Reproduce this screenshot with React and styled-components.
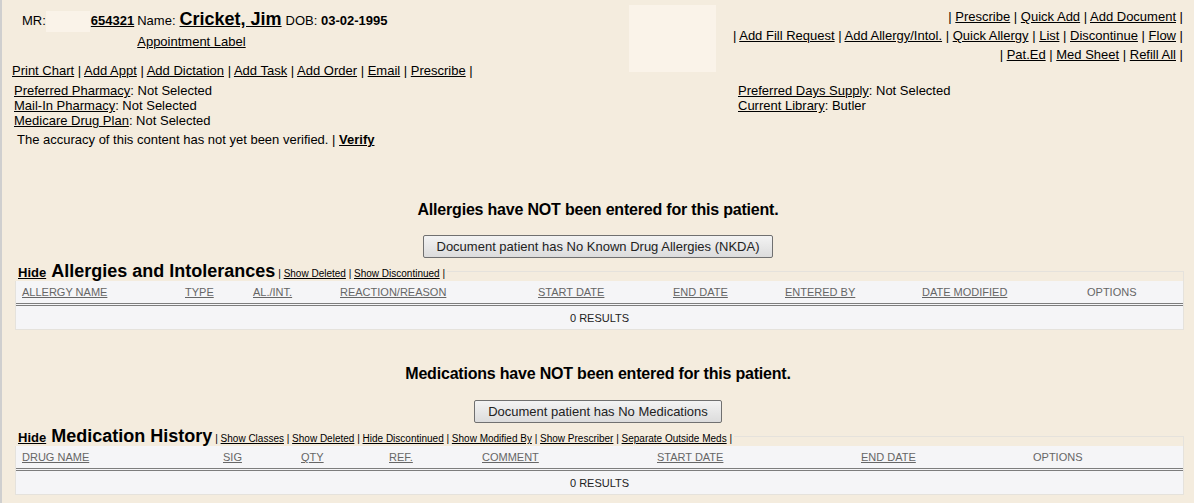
import React from "react";
import styled, { createGlobalStyle } from "styled-components";

const GlobalStyle = createGlobalStyle`
  html, body {
    margin: 0;
    padding: 0;
    background: #f4ecde;
  }
  body {
    font-family: "Liberation Sans", Arial, sans-serif;
    font-size: 13px;
    color: #000;
  }
`;

const Page = styled.div`
  min-height: 100vh;
  box-sizing: border-box;
  border-left: 2px solid #cfcfcf;
`;

const Link = styled.a`
  color: #000;
  text-decoration: underline;
  cursor: pointer;
  font-weight: ${(p) => (p.$bold ? "bold" : "normal")};
`;

const Header = styled.div`
  display: flex;
  align-items: flex-start;
  padding-top: 5px;
`;

const PatientBlock = styled.div`
  padding-top: 3px;
`;

const PatientGrid = styled.div`
  display: grid;
  grid-template-columns: auto auto;
  justify-content: start;
  align-items: baseline;
  column-gap: 3px;
  row-gap: 2px;
  margin-left: 20px;
`;

const InfoCell = styled.div`
  line-height: 22px;
  white-space: nowrap;
`;

const Masked = styled.span`
  display: inline-block;
  width: 44px;
  height: 21px;
  margin: 0 1px 0 0;
  vertical-align: middle;
  background: #faf3e9;
`;

const PatientName = styled(Link)`
  font-size: 18px;
  font-weight: bold;
  margin: 0 4px;
`;

const Strong = styled.b`
  font-weight: bold;
`;

const SubCell = styled.div`
  grid-column: 2;
  line-height: 16px;
`;

const LinkRow = styled.div`
  margin: ${(p) => p.$margin || "0"};
  line-height: 16px;
  white-space: nowrap;
`;

const RightGroup = styled.div`
  margin-left: auto;
  display: flex;
  gap: 17px;
  padding-right: 11px;
`;

const PhotoBox = styled.div`
  width: 87px;
  height: 67px;
  background: #faf3e9;
`;

const ActionLinks = styled.div`
  padding-top: 2px;
  text-align: right;
  line-height: 19px;
  white-space: nowrap;
`;

const Settings = styled.div`
  display: grid;
  grid-template-columns: 724px 1fr;
  margin-top: 4px;
  padding-left: 12px;
  line-height: 15px;
`;

const Accuracy = styled.div`
  margin-top: 4px;
  padding-left: 15px;
  line-height: 16px;
`;

const Notice = styled.div`
  margin-top: ${(p) => p.$top}px;
  text-align: center;
  font-size: 16px;
  font-weight: bold;
  line-height: 19px;
  letter-spacing: -0.2px;
`;

const ButtonRow = styled.div`
  display: flex;
  justify-content: center;
  margin-top: ${(p) => p.$top || 16}px;
`;

const Button = styled.button`
  height: 23px;
  padding: 0 13px;
  font-family: "Liberation Sans", Arial, sans-serif;
  font-size: 13px;
  color: #222;
  background: linear-gradient(#f3f3f3, #dcdcdc);
  border: 1px solid #707070;
  border-radius: 2px;
`;

const Section = styled.div`
  margin-top: 4px;
  padding: 0 10px 0 13px;
`;

const TitleRow = styled.div`
  display: flex;
  align-items: flex-end;
  height: 19px;
`;

const TitleGroup = styled.div`
  display: flex;
  align-items: baseline;
  padding: 0 2px 0 3px;
  white-space: nowrap;
`;

const Title = styled.span`
  margin-left: 5px;
  font-size: 18px;
  font-weight: bold;
  line-height: 19px;
`;

const SmallLinks = styled.span`
  margin-left: 3px;
  font-size: 10px;
`;

const Filler = styled.div`
  flex: 1;
  height: 10px;
  box-sizing: border-box;
  border-top: 1px solid #e5e2dc;
  border-right: 1px solid #e5e2dc;
`;

const Table = styled.div`
  border: 1px solid #e5e2dc;
  border-top: none;
  background: #f5f5f7;
`;

const HeadRow = styled.div`
  display: grid;
  grid-template-columns: ${(p) => p.$cols};
  align-items: center;
  height: 22px;
  padding-left: 6px;
  border-bottom: 3px double #7d7d7d;
`;

const HeadCell = styled.span`
  font-size: 11px;
  color: #666;
  text-decoration: ${(p) => (p.$sortable ? "underline" : "none")};
  white-space: nowrap;
`;

const Results = styled.div`
  height: 23px;
  display: flex;
  align-items: center;
  justify-content: center;
  font-size: 11px;
  color: #222;
`;

function Links({ items, leading }) {
  return (
    <>
      {leading && "| "}
      {items.map((t, i) => (
        <React.Fragment key={t}>
          {i > 0 && " | "}
          <Link>{t}</Link>
        </React.Fragment>
      ))}
      {" |"}
    </>
  );
}

function DataSection({ title, links, cols, columns }) {
  return (
    <Section>
      <TitleRow>
        <TitleGroup>
          <Link $bold>Hide</Link>
          <Title>{title}</Title>
          <SmallLinks>
            <Links leading items={links} />
          </SmallLinks>
        </TitleGroup>
        <Filler />
      </TitleRow>
      <Table>
        <HeadRow $cols={cols}>
          {columns.map((c) => (
            <HeadCell key={c} $sortable={c !== "OPTIONS"}>
              {c}
            </HeadCell>
          ))}
        </HeadRow>
        <Results>0 RESULTS</Results>
      </Table>
    </Section>
  );
}

const allergyCols = "163px 68px 87px 198px 135px 112px 137px 165px 1fr";
const medCols = "201px 78px 88px 93px 175px 204px 172px 1fr";

export default function App() {
  return (
    <Page>
      <GlobalStyle />
      <Header>
        <PatientBlock>
          <PatientGrid>
            <InfoCell>
              MR:<Masked />
              <Link $bold>654321</Link>
            </InfoCell>
            <InfoCell>
              Name:<PatientName>Cricket, Jim</PatientName>DOB: <Strong>03-02-1995</Strong>
            </InfoCell>
            <SubCell>
              <Link>Appointment Label</Link>
            </SubCell>
          </PatientGrid>
          <LinkRow $margin="13px 0 0 10px">
            <Links
              items={["Print Chart", "Add Appt", "Add Dictation", "Add Task", "Add Order", "Email", "Prescribe"]}
            />
          </LinkRow>
        </PatientBlock>
        <RightGroup>
          <PhotoBox />
          <ActionLinks>
            <div>
              <Links leading items={["Prescribe", "Quick Add", "Add Document"]} />
            </div>
            <div>
              <Links
                leading
                items={["Add Fill Request", "Add Allergy/Intol.", "Quick Allergy", "List", "Discontinue", "Flow"]}
              />
            </div>
            <div>
              <Links leading items={["Pat.Ed", "Med Sheet", "Refill All"]} />
            </div>
          </ActionLinks>
        </RightGroup>
      </Header>

      <Settings>
        <div>
          <div>
            <Link>Preferred Pharmacy</Link>: Not Selected
          </div>
          <div>
            <Link>Mail-In Pharmacy</Link>: Not Selected
          </div>
          <div>
            <Link>Medicare Drug Plan</Link>: Not Selected
          </div>
        </div>
        <div>
          <div>
            <Link>Preferred Days Supply</Link>: Not Selected
          </div>
          <div>
            <Link>Current Library</Link>: Butler
          </div>
        </div>
      </Settings>

      <Accuracy>
        The accuracy of this content has not yet been verified. | <Link $bold>Verify</Link>
      </Accuracy>

      <Notice $top={52}>Allergies have NOT been entered for this patient.</Notice>
      <ButtonRow>
        <Button>Document patient has No Known Drug Allergies (NKDA)</Button>
      </ButtonRow>
      <DataSection
        title="Allergies and Intolerances"
        links={["Show Deleted", "Show Discontinued"]}
        cols={allergyCols}
        columns={[
          "ALLERGY NAME",
          "TYPE",
          "AL./INT.",
          "REACTION/REASON",
          "START DATE",
          "END DATE",
          "ENTERED BY",
          "DATE MODIFIED",
          "OPTIONS",
        ]}
      />

      <Notice $top={34}>Medications have NOT been entered for this patient.</Notice>
      <ButtonRow $top={17}>
        <Button>Document patient has No Medications</Button>
      </ButtonRow>
      <DataSection
        title="Medication History"
        links={[
          "Show Classes",
          "Show Deleted",
          "Hide Discontinued",
          "Show Modified By",
          "Show Prescriber",
          "Separate Outside Meds",
        ]}
        cols={medCols}
        columns={["DRUG NAME", "SIG", "QTY", "REF.", "COMMENT", "START DATE", "END DATE", "OPTIONS"]}
      />
    </Page>
  );
}
